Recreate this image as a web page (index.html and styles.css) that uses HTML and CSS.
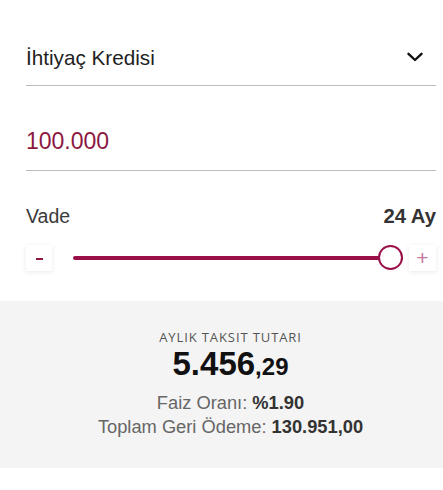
FILE: index.html
```html
<!DOCTYPE html>
<html lang="tr">
<head>
<meta charset="utf-8">
<link rel="stylesheet" href="styles.css">
</head>
<body>
<div class="form">
  <div class="select">
    <span class="select-text">İhtiyaç Kredisi</span>
    <svg class="chevron" width="16" height="10" viewBox="0 0 16 10"><polyline points="1.5,1.8 8,8 14.5,1.8" fill="none" stroke="#111" stroke-width="2.4" stroke-linecap="round" stroke-linejoin="round"/></svg>
  </div>
  <div class="amount">100.000</div>
  <div class="term-head">
    <span class="term-label">Vade</span>
    <span class="term-value">24 Ay</span>
  </div>
  <div class="slider-row">
    <div class="step-btn minus"><span class="dash"></span></div>
    <div class="slider">
      <div class="track"></div>
      <div class="thumb"></div>
    </div>
    <div class="step-btn plus">+</div>
  </div>
</div>
<div class="summary">
  <div class="summary-title">AYLIK TAKSIT TUTARI</div>
  <div class="summary-amount">5.456<span class="cents">,29</span></div>
  <div class="summary-line">Faiz Oranı: <b>%1.90</b></div>
  <div class="summary-line">Toplam Geri Ödeme: <b>130.951,00</b></div>
</div>
</body>
</html>
```
FILE: styles.css
```css
html, body {
  margin: 0;
  padding: 0;
  background: #fff;
}
body {
  font-family: "Liberation Sans", Arial, sans-serif;
  color: #222;
}
.form {
  padding: 0 7px 0 26px;
}
.select {
  display: flex;
  align-items: center;
  justify-content: space-between;
  padding: 46px 0 15px;
  border-bottom: 1px solid #bdbdbd;
}
.select-text {
  font-size: 20.7px;
  line-height: 24px;
  color: #1e1e1e;
}
.chevron {
  margin-right: 13px;
  margin-top: -2px;
}
.amount {
  margin-top: 41px;
  padding-bottom: 15px;
  font-size: 23px;
  line-height: 28px;
  color: #8c1842;
  border-bottom: 1px solid #bdbdbd;
}
.term-head {
  margin-top: 33px;
  display: flex;
  justify-content: space-between;
  align-items: center;
  line-height: 24px;
}
.term-label {
  font-size: 19.5px;
  color: #3a3a3a;
}
.term-value {
  font-size: 20.3px;
  font-weight: bold;
  color: #333;
}
.slider-row {
  margin-top: 17px;
  display: flex;
  align-items: center;
  height: 26px;
}
.step-btn {
  width: 26px;
  height: 26px;
  background: #fff;
  box-shadow: 0 1px 5px rgba(0, 0, 0, 0.09);
  display: flex;
  align-items: center;
  justify-content: center;
}
.step-btn.plus {
  width: 27px;
  color: #c8789e;
  font-size: 21px;
  line-height: 26px;
}
.dash {
  width: 7px;
  height: 2.5px;
  background: #8c1842;
  margin-top: 2px;
}
.slider {
  flex: 1;
  position: relative;
  height: 26px;
  margin: 0 6px 0 21px;
  display: flex;
  align-items: center;
}
.track {
  width: 100%;
  height: 4px;
  border-radius: 2px;
  background: #9b0f48;
}
.thumb {
  position: absolute;
  right: 0;
  top: 0;
  width: 21px;
  height: 21px;
  border: 2.5px solid #9b0f48;
  border-radius: 50%;
  background: #fff;
}
.summary {
  margin-top: 30px;
  background: #f4f4f4;
  padding: 28px 0 29px 18px;
  text-align: center;
}
.summary-title {
  font-family: "Open Sans", sans-serif;
  font-size: 13px;
  line-height: 16px;
  color: #555;
  letter-spacing: 0.9px;
}
.summary-amount {
  font-size: 33px;
  line-height: 38px;
  font-weight: bold;
  color: #111;
}
.cents {
  font-size: 24px;
}
.summary-line {
  font-size: 18.3px;
  line-height: 24px;
  color: #666;
}
.summary-amount + .summary-line {
  margin-top: 5px;
}
.summary-line b {
  color: #333;
}
```
